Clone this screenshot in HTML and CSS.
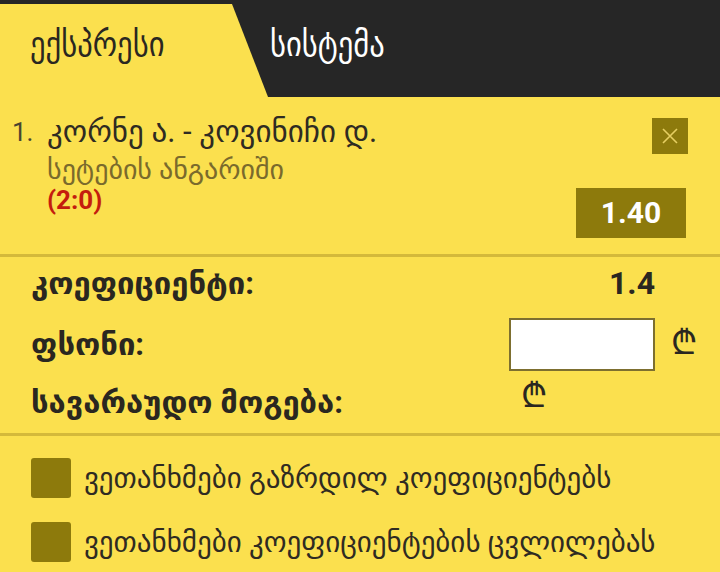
FILE: index.html
```html
<!DOCTYPE html>
<html lang="ka">
<head>
    <meta charset="UTF-8">
    <title>ბილეთი</title>
    <link rel="stylesheet" href="styles.css">
</head>
<body>
    <div class="tabs">
        <div class="tab tab-active">ექსპრესი</div>
        <div class="tab tab-other">სისტემა</div>
    </div>

    <div class="bet">
        <div class="bet-num">1.</div>
        <div class="bet-info">
            <div class="bet-title">კორნე ა. - კოვინიჩი დ.</div>
            <div class="bet-market">სეტების ანგარიში</div>
            <div class="bet-pick">(2:0)</div>
        </div>
        <div class="bet-actions">
            <button class="close-btn">
                <svg width="18" height="18" viewBox="0 0 18 18">
                    <path d="M2 2 L16 16 M16 2 L2 16" stroke="#e6cf62" stroke-width="1.6"/>
                </svg>
            </button>
            <div class="odds">1.40</div>
        </div>
    </div>

    <div class="summary">
        <div class="label bold">კოეფიციენტი:</div>
        <div class="value">1.4</div>
        <div></div>

        <div class="label bold stake-cell">ფსონი:</div>
        <input class="stake stake-cell" type="text">
        <div class="lari stake-cell">₾</div>

        <div class="label bold">სავარაუდო მოგება:</div>
        <div class="win"><span class="lari">₾</span></div>
        <div></div>
    </div>

    <div class="agree">
        <label class="check-row"><span class="check"></span>ვეთანხმები გაზრდილ კოეფიციენტებს</label>
        <label class="check-row"><span class="check"></span>ვეთანხმები კოეფიციენტების ცვლილებას</label>
    </div>
</body>
</html>
```

FILE: styles.css
```css
body {
    margin: 0;
    width: 720px;
    height: 572px;
    overflow: hidden;
    background: #fbe04e;
    font-family: Roboto, 'DejaVu Sans', sans-serif;
    color: #2a2720;
}
.tabs {
    display: flex;
    height: 93px;
    padding-top: 4px;
    background: #262626;
}
.tab {
    display: flex;
    align-items: center;
    font-family: 'DejaVu Sans Condensed', 'DejaVu Sans', sans-serif;
    font-stretch: condensed;
    font-size: 34px;
    color: #fff;
    padding-bottom: 13px;
}
.tab-active {
    width: 238px;
    padding-left: 30px;
    color: #2a2720;
    background: #fbe04e;
    clip-path: polygon(0 0, 232px 0, 268px 100%, 0 100%);
}
.tab-other {
    padding-left: 2px;
}
.bet {
    display: grid;
    grid-template-columns: 35px 1fr auto;
    padding: 21px 34px 16px 12px;
    border-bottom: 3px solid #d4b93a;
}
.bet-num {
    margin-top: -3px;
    font-size: 26px;
    line-height: 34px;
    color: #4a4430;
}
.bet-info {
    margin-top: -3px;
}
.bet-title {
    font-size: 31px;
    line-height: 34px;
    color: #2f2b22;
}
.bet-market {
    margin-top: 5px;
    font-size: 28px;
    line-height: 32px;
    color: #7a6a2c;
}
.bet-pick {
    font-size: 26px;
    font-weight: bold;
    line-height: 28px;
    color: #c41d0e;
}
.bet-actions {
    display: flex;
    flex-direction: column;
    align-items: flex-end;
    gap: 34px;
}
.close-btn {
    width: 36px;
    height: 36px;
    margin-right: -2px;
    padding: 0;
    border: none;
    background: #8d7a0c;
    display: flex;
    align-items: center;
    justify-content: center;
}
.odds {
    width: 110px;
    height: 50px;
    line-height: 50px;
    text-align: center;
    background: #8d7a0c;
    color: #fff;
    font-size: 30px;
    font-weight: bold;
}
.summary {
    display: grid;
    grid-template-columns: 1fr 146px 65px;
    grid-template-rows: 30px 64px 44px;
    row-gap: 9px;
    align-items: center;
    padding: 11px 0 9px 31px;
    border-bottom: 3px solid #d4b93a;
}
.stake-cell {
    align-self: end;
    height: 53px;
    display: flex;
    align-items: center;
}
.label {
    font-size: 31px;
}
.bold {
    font-weight: bold;
}
.value {
    text-align: right;
    font-size: 32px;
    font-weight: bold;
}
.stake {
    box-sizing: border-box;
    width: 146px;
    border: 2px solid #7d6f2f;
    background: #fff;
    margin: 0;
}
.lari {
    font-family: 'DejaVu Sans', sans-serif;
    font-size: 34px;
    padding-left: 16px;
    padding-bottom: 4px;
}
.win .lari {
    padding-left: 12px;
    padding-bottom: 0;
    position: relative;
    top: -8px;
}
.agree {
    display: flex;
    flex-direction: column;
    gap: 24px;
    padding: 22px 31px;
}
.check-row {
    display: flex;
    align-items: center;
    gap: 13px;
    font-size: 29px;
    color: #2f2b22;
}
.check {
    width: 40px;
    height: 40px;
    flex-shrink: 0;
    border-radius: 3px;
    background: #8d7a0c;
}
```
